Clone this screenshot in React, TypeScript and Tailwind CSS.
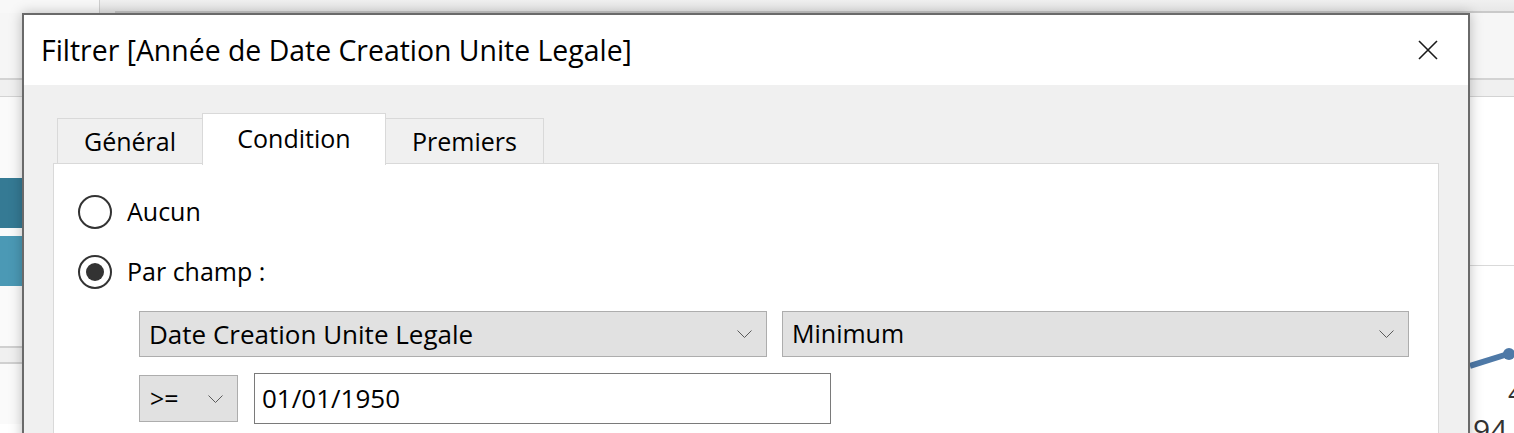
import React from 'react';

const Chevron = () => (
  <svg width="15" height="8" viewBox="0 0 15 8" className="shrink-0">
    <path d="M0.5 0.5 L7.5 7.5 L14.5 0.5" fill="none" stroke="#5a5a5a" strokeWidth="1" />
  </svg>
);

const Radio = ({ checked }: { checked?: boolean }) => (
  <div className="w-[34px] h-[34px] rounded-full border-2 border-[#333333] bg-white flex items-center justify-center shrink-0">
    {checked && <div className="w-[18px] h-[18px] rounded-full bg-[#333333]" />}
  </div>
);

const Select = ({ label, className }: { label: string; className: string }) => (
  <div
    className={`h-[46px] bg-[#e1e1e1] border border-[#adadad] flex items-center justify-between pl-[9px] pr-[14px] ${className}`}
  >
    <span>{label}</span>
    <Chevron />
  </div>
);

const App: React.FC = () => {
  return (
    <div className="relative w-[1514px] h-[433px] overflow-hidden bg-white font-['Open_Sans',sans-serif] text-[25px] text-black">
      {/* Background worksheet */}
      <div className="flex h-[13px]">
        <div className="w-[100px] bg-[#f8f8f8] border-r border-[#cfcfcf]" />
        <div className="flex-1 flex flex-col justify-end bg-gradient-to-b from-[#f0f0f0] to-[#e6e6e6]">
          <div className="ml-[15px] h-[2px] bg-[#c9c9c9]" />
        </div>
      </div>
      <div className="h-[67px] bg-[#f6f6f6] border-b-2 border-[#d3d3d3]" />
      <div className="h-[17px] bg-[#f0f0f0] border-b border-[#d3d3d3]" />
      <div className="flex">
        <div className="w-[60px] flex flex-col">
          <div className="h-[81px] bg-[#fafafa]" />
          <div className="h-[50px] bg-[#357a94]" />
          <div className="h-[8px] bg-[#fafafa]" />
          <div className="h-[50px] bg-[#4b99b5]" />
          <div className="h-[60px] bg-[#fafafa]" />
          <div className="h-[18px] bg-[#f0f0f0] border-y-2 border-[#d0d0d0]" />
          <div className="h-[60px] bg-[#fafafa]" />
        </div>
        <div className="flex-1" />
        <div className="w-[44px] flex flex-col">
          <div className="h-[169px] bg-white border-b border-[#d9d9d9]" />
          <div className="relative h-[170px]">
            <svg width="44" height="170" className="absolute left-0 top-0">
              <path d="M0 100 L38 88" stroke="#4e79a7" strokeWidth="6" fill="none" />
              <circle cx="39" cy="88" r="6" fill="#4e79a7" />
            </svg>
            <span className="absolute left-[38px] top-[112px] text-[28px] leading-none text-[#333333]">4</span>
            <span className="absolute left-[3px] top-[149px] text-[30px] leading-none text-[#333333]">94</span>
          </div>
        </div>
      </div>

      {/* Dialog */}
      <div className="absolute left-[22px] top-[13px] w-[1448px] h-[440px] border-2 border-[#6a6a6a] bg-[#f0f0f0] shadow-[0_0_12px_rgba(0,0,0,0.25)] flex flex-col">
        <div className="h-[70px] bg-white flex items-center justify-between pl-[17px] pr-[30px] shrink-0">
          <span className="text-[28.4px]">Filtrer [Année de Date Creation Unite Legale]</span>
          <svg width="20" height="20" viewBox="0 0 20 20">
            <path d="M1 1 L19 19 M19 1 L1 19" stroke="#1a1a1a" strokeWidth="1.6" />
          </svg>
        </div>

        <div className="pt-[28px] px-[29px] flex flex-col">
          <div className="flex items-end pl-[4px] relative z-10">
            <div className="w-[146px] h-[45px] bg-[#f0f0f0] border border-b-0 border-[#d9d9d9] flex items-center justify-center pt-[2px]">
              Général
            </div>
            <div className="w-[184px] h-[52px] -ml-[1px] -mb-[2px] bg-white border border-b-0 border-[#d9d9d9] flex items-center justify-center pb-[2px]">
              Condition
            </div>
            <div className="w-[158px] h-[45px] bg-[#f0f0f0] border border-b-0 border-l-0 border-[#d9d9d9] flex items-center justify-center pt-[2px]">
              Premiers
            </div>
          </div>

          <div className="h-[300px] bg-white border border-[#d9d9d9] pl-[24px] pt-[31px]">
            <div className="flex items-center gap-[15px] h-[34px]">
              <Radio />
              <span>Aucun</span>
            </div>
            <div className="flex items-center gap-[15px] h-[34px] mt-[26px]">
              <Radio checked />
              <span>Par champ :</span>
            </div>
            <div className="flex gap-[15px] ml-[61px] mt-[22px]">
              <Select label="Date Creation Unite Legale" className="w-[628px] text-[26px]" />
              <Select label="Minimum" className="w-[627px]" />
            </div>
            <div className="flex items-center gap-[16px] ml-[61px] mt-[16px] h-[51px]">
              <Select label=">=" className="w-[99px] h-[47px] pl-[10px]" />
              <div className="w-[577px] h-[51px] bg-white border border-[#7a7a7a] flex items-center pl-[7px] text-[26px]">
                01/01/1950
              </div>
            </div>
          </div>
        </div>
      </div>
    </div>
  );
};

export default App;
